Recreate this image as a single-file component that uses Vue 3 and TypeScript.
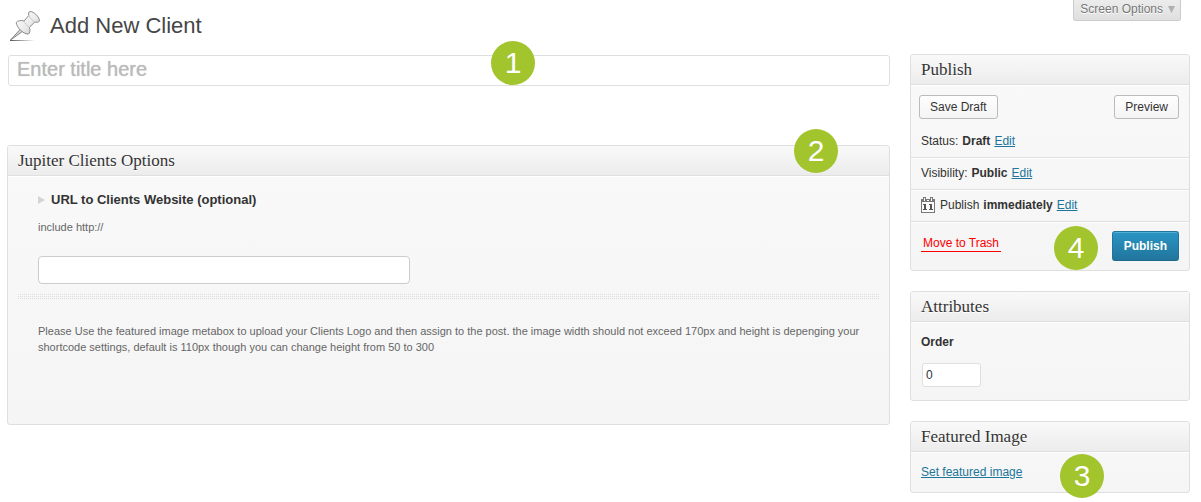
<script setup lang="ts">
import { ref } from 'vue'

const title = ref('')
const clientUrl = ref('')
const order = ref('0')
</script>

<template>
  <div class="page">
    <main class="main">
      <header class="heading">
        <svg class="pin" width="32" height="32" viewBox="0 0 32 32" aria-hidden="true">
          <defs>
            <linearGradient id="pinBody" x1="0" y1="0" x2="1" y2="1">
              <stop offset="0" stop-color="#ffffff" />
              <stop offset="0.55" stop-color="#ebebeb" />
              <stop offset="1" stop-color="#bcbcbc" />
            </linearGradient>
            <linearGradient id="pinShade" x1="0" y1="0" x2="1" y2="0">
              <stop offset="0" stop-color="#555" />
              <stop offset="1" stop-color="#555" stop-opacity="0" />
            </linearGradient>
          </defs>
          <rect x="1" y="30" width="25" height="1" fill="url(#pinShade)" />
          <path d="M12 18.5 L1.5 30 L14 21 Z" fill="#d8d8d8" stroke="#777" stroke-width="0.9" stroke-linejoin="round" />
          <path d="M21 1.5 C19.5 2 19.3 3.5 19.8 5.4 L15 11 C12 10 8.5 10.6 7.2 12.6 C7.8 17.5 13.5 23.5 19.2 24.2 C21 23 21.5 20.5 20.4 17.3 L25.8 12 C27.8 12.6 29.8 12.2 30.5 11 C30.5 7 25 1.5 21 1.5 Z" fill="url(#pinBody)" stroke="#8b8b8b" stroke-width="1" stroke-linejoin="round" />
          <path d="M19.8 5.4 C21.3 8.4 23.4 10.8 25.8 12 M15 11 C16 13.5 18 16 20.4 17.3" fill="none" stroke="#c2c2c2" stroke-width="0.8" />
        </svg>
        <h1>Add New Client</h1>
      </header>

      <div class="title-field">
        <input v-model="title" class="title-input" type="text" placeholder="Enter title here" aria-label="Enter title here" />
        <span class="badge badge-title">1</span>
      </div>

      <section class="box options">
        <h2>Jupiter Clients Options</h2>
        <span class="badge badge-options">2</span>
        <div class="options-body">
          <div class="field">
            <label for="client-url">URL to Clients Website (optional)</label>
            <p class="hint">include http://</p>
            <input id="client-url" v-model="clientUrl" class="url-input" type="text" />
          </div>
          <div class="divider"></div>
          <p class="note">
            Please Use the featured image metabox to upload your Clients Logo and then assign to the post. the image width should not exceed 170px and height is depenging your shortcode settings, default is 110px though you can change height from 50 to 300
          </p>
        </div>
      </section>
    </main>

    <aside class="side">
      <div class="screen-row">
        <button class="screen-options" type="button">
          Screen Options
          <svg class="arrow" width="7" height="7" viewBox="0 0 7 7" aria-hidden="true"><path d="M0 0 H7 L3.5 7 Z" fill="#b0b0b0" /></svg>
        </button>
      </div>

      <section class="box publish">
        <h2>Publish</h2>
        <div class="draft-row">
          <button class="button" type="button">Save Draft</button>
          <button class="button" type="button">Preview</button>
        </div>
        <div class="line">Status: <b>Draft</b> <a href="#status">Edit</a></div>
        <div class="line">Visibility: <b>Public</b> <a href="#visibility">Edit</a></div>
        <div class="line">
          <svg class="calendar" width="14" height="16" viewBox="0 0 14 16" aria-hidden="true">
            <path d="M0 2 H14 V16 H0 Z" fill="#777" />
            <path d="M1 5 H13 V15 H1 Z" fill="#fafafa" />
            <path d="M2 0 H5 V4 H2 Z M9 0 H12 V4 H9 Z" fill="#777" />
            <path d="M3 1 H4 V4 H3 Z M10 1 H11 V4 H10 Z M6 3 H8 V4 H6 Z" fill="#fff" />
            <path d="M2 7 H5 V12 H6 V13 H2 V12 H3 V8 H2 Z M8 7 H11 V12 H12 V13 H8 V12 H9 V8 H8 Z" fill="#555" />
          </svg>
          Publish <b>immediately</b> <a href="#date">Edit</a>
        </div>
        <div class="actions">
          <a class="trash" href="#trash">Move to Trash</a>
          <span class="badge badge-publish">4</span>
          <button class="primary" type="button">Publish</button>
        </div>
      </section>

      <section class="box attributes">
        <h2>Attributes</h2>
        <div class="attributes-body">
          <label for="order">Order</label>
          <input id="order" v-model="order" class="order-input" type="text" />
        </div>
      </section>

      <section class="box featured">
        <h2>Featured Image</h2>
        <div class="featured-body">
          <a href="#featured">Set featured image</a>
        </div>
        <span class="badge badge-featured">3</span>
      </section>
    </aside>
  </div>
</template>

<style>
body {
  margin: 0;
  background: #fff;
}
</style>

<style scoped>
.page {
  display: grid;
  grid-template-columns: minmax(0, 1fr) 280px;
  gap: 20px;
  padding: 0 11px 10px 7px;
  font: 12px/16px "Liberation Sans", Arial, sans-serif;
  color: #333;
}
.page * {
  box-sizing: border-box;
}
h1, h2, p {
  margin: 0;
}
a {
  color: #21759b;
}
input, button {
  font-family: inherit;
}
.heading {
  display: flex;
  align-items: center;
  gap: 9px;
  height: 55px;
  padding: 0 2px 3px;
}
h1 {
  font-size: 22px;
  line-height: 28px;
  font-weight: 400;
  color: #464646;
}
.title-field {
  position: relative;
  padding-left: 1px;
}
.title-input {
  display: block;
  width: 100%;
  height: 31px;
  padding: 0 8px 2px;
  border: 1px solid #dfdfdf;
  border-radius: 3px;
  background: #fff;
  font-size: 20px;
  color: #333;
}
.title-input::placeholder {
  color: #bbb;
  opacity: 1;
  text-shadow: 0 0 1px #bbb;
}
.box {
  position: relative;
  border: 1px solid #dfdfdf;
  border-radius: 3px;
  background: linear-gradient(to top, #f5f5f5, #f9f9f9);
}
h2 {
  height: 30px;
  padding: 0 10px;
  border-bottom: 1px solid #dfdfdf;
  border-radius: 2px 2px 0 0;
  background: linear-gradient(to top, #ececec, #f9f9f9);
  box-shadow: 0 1px 0 #fff;
  font: 400 17px/30px "Liberation Serif", Georgia, serif;
  color: #333;
  text-shadow: 0 1px 0 #fff;
}
.badge {
  position: absolute;
  width: 44px;
  height: 44px;
  border-radius: 50%;
  background: #a2c42d;
  color: #fff;
  font-size: 30px;
  line-height: 44px;
  text-align: center;
}
.badge-title {
  left: 484px;
  top: -14px;
}
.badge-options {
  right: 51px;
  top: -17px;
}
.badge-publish {
  right: 91px;
  top: 4px;
}
.badge-featured {
  right: 85px;
  top: 32px;
}
.options {
  min-height: 280px;
  margin-top: 59px;
}
.options-body {
  padding: 16px 10px;
}
.field {
  padding: 0 20px;
}
.field label {
  display: flex;
  align-items: center;
  gap: 6px;
  font-size: 13px;
  font-weight: 700;
}
.field label::before {
  content: "";
  border-left: 7px solid #d5d5d5;
  border-top: 4px solid transparent;
  border-bottom: 4px solid transparent;
}
.hint {
  margin-top: 11px;
  font-size: 11px;
  color: #666;
}
.url-input {
  display: block;
  width: 372px;
  max-width: 100%;
  height: 28px;
  margin-top: 21px;
  padding: 0 8px;
  border: 1px solid #ccc;
  border-radius: 4px;
  background: #fff;
  font-size: 12px;
}
.divider {
  height: 6px;
  margin-top: 10px;
  background: conic-gradient(from 0deg at 1px 1px, transparent 75%, #dcdcdc 75%) 0 0 / 2px 2px;
}
.note {
  margin-top: 23px;
  padding: 0 10px 0 20px;
  font-size: 11px;
  color: #666;
}
.screen-row {
  display: flex;
  justify-content: flex-end;
  height: 54px;
  padding-right: 9px;
}
.screen-options {
  display: flex;
  align-items: center;
  gap: 5px;
  height: 21px;
  padding: 0 5px 3px 6px;
  border: 1px solid #ccc;
  border-top: 0;
  border-radius: 0 0 3px 3px;
  background: linear-gradient(to top, #dfdfdf, #ececec);
  font-size: 12px;
  color: #777;
  text-shadow: 0 1px 0 #fff;
}
.arrow {
  margin-top: 2px;
}
.draft-row {
  display: flex;
  justify-content: space-between;
  padding: 10px 10px 7px 8px;
}
.button {
  height: 24px;
  padding: 0 10px;
  border: 1px solid #bbb;
  border-radius: 3px;
  background: linear-gradient(to top, #f4f4f4, #fefefe);
  font-size: 12px;
  color: #333;
}
.line {
  display: flex;
  align-items: center;
  gap: 4px;
  height: 32px;
  padding: 0 10px 2px;
  border-bottom: 1px solid #dfdfdf;
  box-shadow: 0 1px 0 #fff;
}
.calendar {
  margin-right: 1px;
}
.actions {
  position: relative;
  display: flex;
  align-items: center;
  justify-content: space-between;
  height: 48px;
  padding: 0 10px;
}
.trash {
  padding: 0 2px;
  margin-bottom: 5px;
  border-bottom: 1px solid #f00;
  color: #f00;
  text-decoration: none;
}
.primary {
  height: 30px;
  padding: 0 11px;
  border: 1px solid #21759b;
  border-bottom-color: #1e6a8d;
  border-radius: 3px;
  background: linear-gradient(to bottom, #2a95c5, #21759b);
  box-shadow: inset 0 1px 0 rgba(120, 200, 230, 0.5);
  font-size: 12px;
  font-weight: 700;
  color: #fff;
}
.attributes, .featured {
  margin-top: 20px;
}
.attributes-body {
  display: flex;
  flex-direction: column;
  align-items: flex-start;
  gap: 13px;
  padding: 12px 10px 13px;
}
.attributes-body label {
  font-weight: 700;
}
.order-input {
  width: 59px;
  height: 24px;
  margin-left: 1px;
  padding: 0 3px;
  border: 1px solid #dfdfdf;
  border-radius: 3px;
  background: #fff;
  font-size: 12px;
  color: #333;
}
.featured-body {
  padding: 12px 10px;
}
</style>
